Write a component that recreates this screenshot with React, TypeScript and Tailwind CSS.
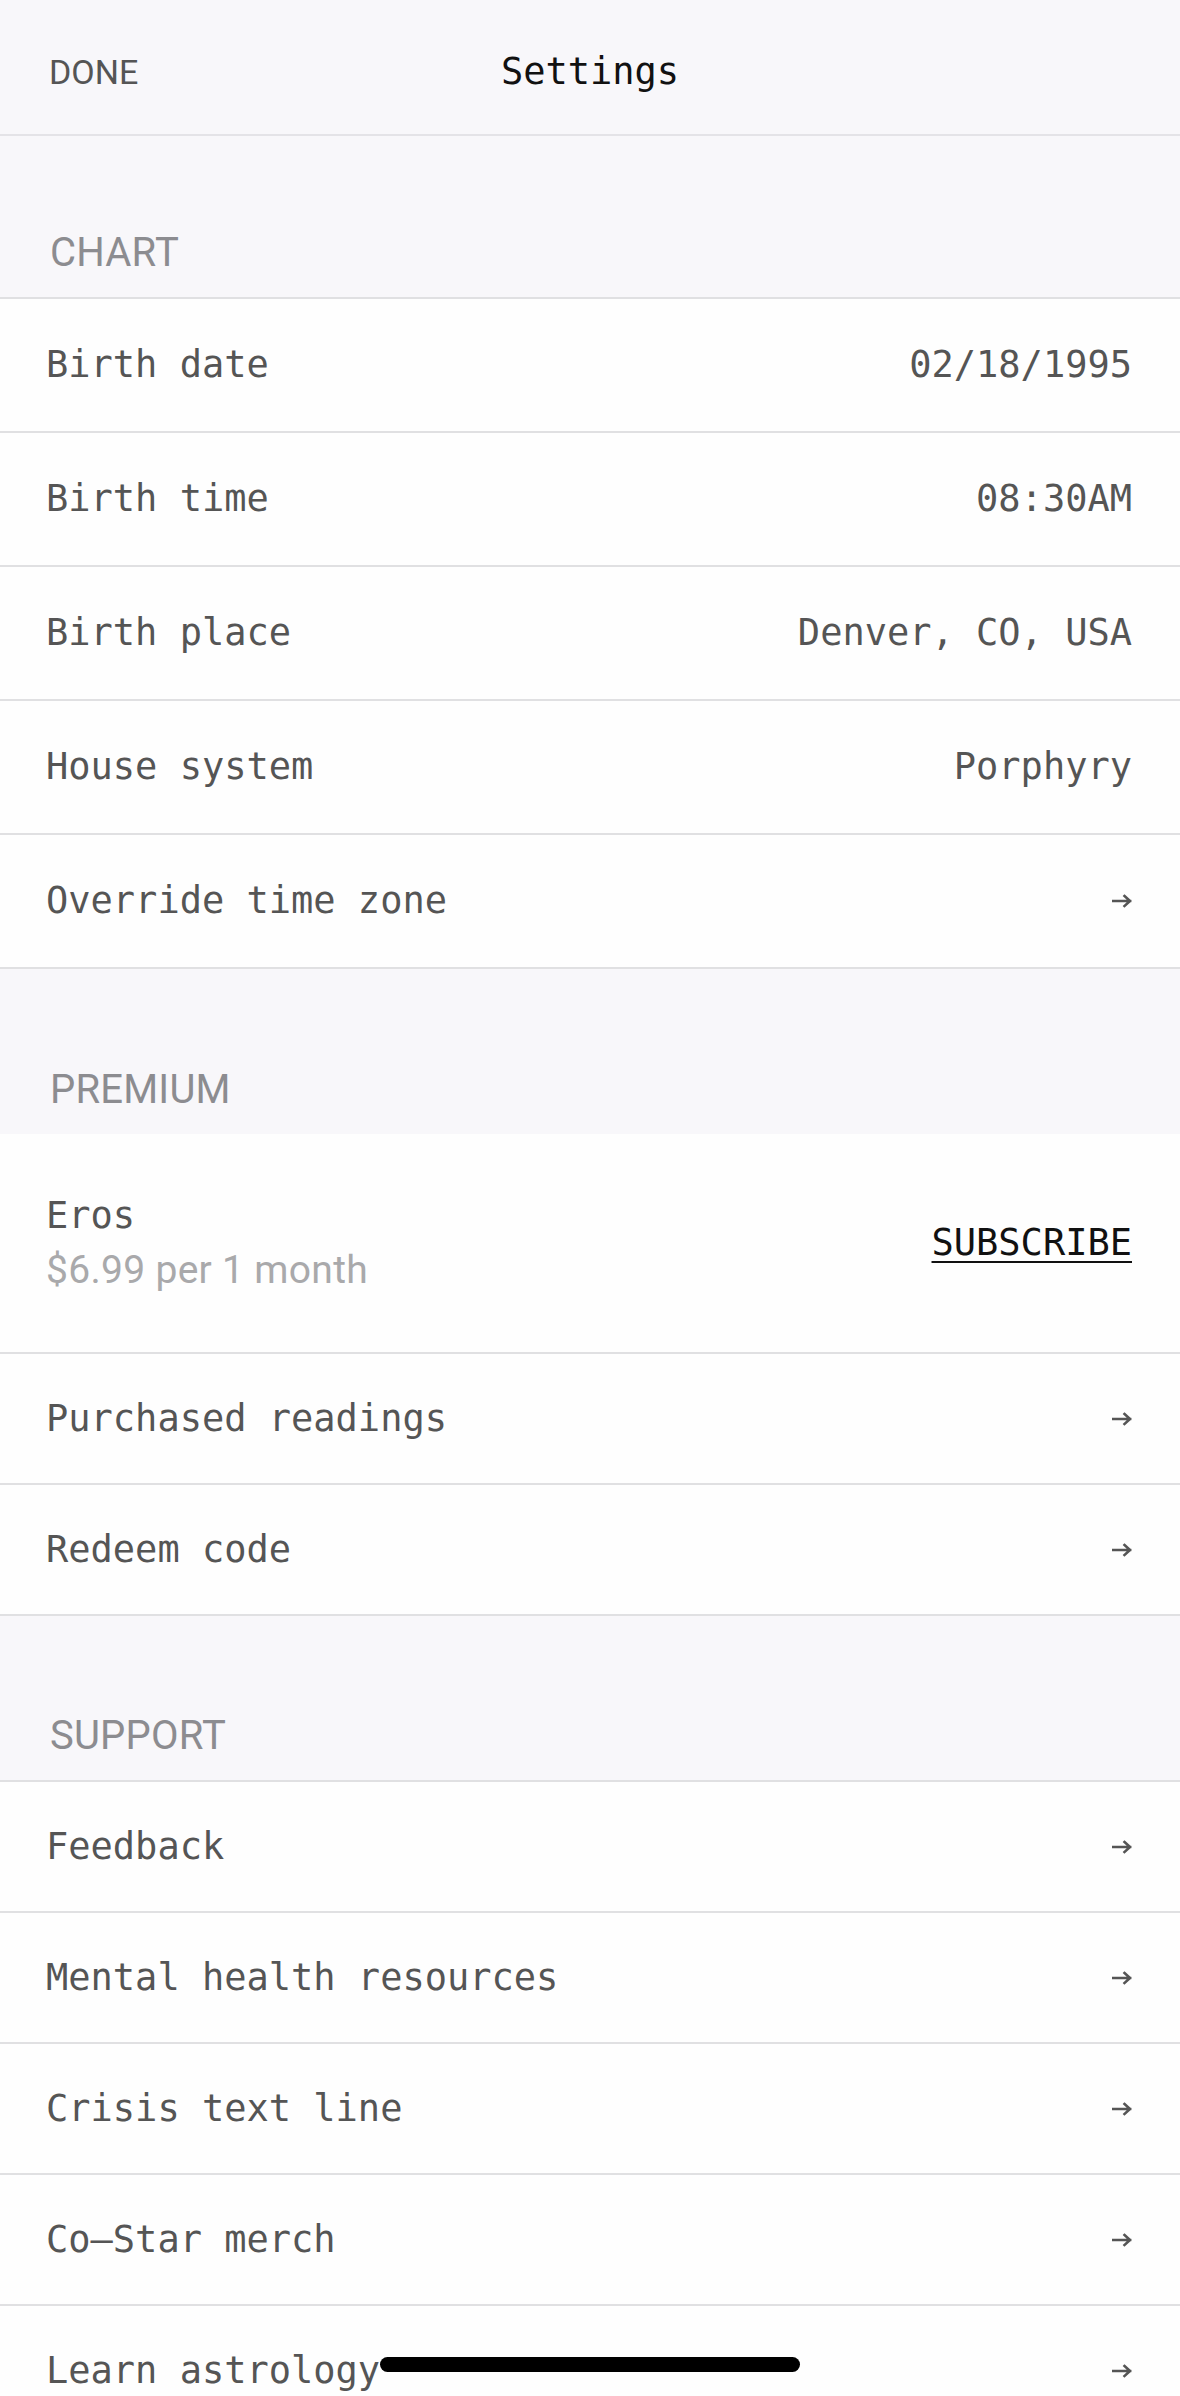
import React from 'react';

const mono = "font-['DejaVu_Sans_Mono','Liberation_Mono',monospace]";
const sans = "font-['Roboto','Liberation_Sans',sans-serif]";

type Row = { label: string; value?: string };

const chart: Row[] = [
  { label: 'Birth date', value: '02/18/1995' },
  { label: 'Birth time', value: '08:30AM' },
  { label: 'Birth place', value: 'Denver, CO, USA' },
  { label: 'House system', value: 'Porphyry' },
  { label: 'Override time zone' },
];

const premium: Row[] = [
  { label: 'Purchased readings' },
  { label: 'Redeem code' },
];

const support: Row[] = [
  { label: 'Feedback' },
  { label: 'Mental health resources' },
  { label: 'Crisis text line' },
  { label: 'Co\u2013Star merch' },
  { label: 'Learn astrology' },
];

function Arrow() {
  return (
    <svg width="20" height="14" viewBox="0 0 20 14" fill="none">
      <path
        d="M1 7h17M12.5 2l5.5 5-5.5 5"
        stroke="#555555"
        strokeWidth="2.6"
        strokeLinecap="square"
      />
    </svg>
  );
}

function SectionTitle({ title, size }: { title: string; size: 'chart' | 'premium' | 'support' }) {
  const box =
    size === 'chart'
      ? 'h-[163px] border-b-2 border-[#e0e0e2]'
      : size === 'support'
        ? 'h-[166px] border-b-2 border-[#e0e0e2]'
        : 'h-[165px]';
  return (
    <div className={`flex items-end bg-[#f8f7fa] px-[50px] pb-[24px] ${box}`}>
      <span className={`${sans} text-[40px] leading-none tracking-[0.2px] text-[#8c8c90]`}>
        {title}
      </span>
    </div>
  );
}

function SettingRow({ row, tall }: { row: Row; tall?: boolean }) {
  return (
    <div
      className={`flex items-center justify-between border-b-2 border-[#e0e0e2] bg-[#fefefe] pl-[46px] pr-[48px] ${
        tall ? 'h-[134px]' : 'h-[131px]'
      }`}
    >
      <span className={`${mono} text-[37px] text-[#555555]`}>{row.label}</span>
      {row.value ? (
        <span className={`${mono} text-[37px] text-[#555555]`}>{row.value}</span>
      ) : (
        <Arrow />
      )}
    </div>
  );
}

export default function App() {
  return (
    <div className="relative h-[2396px] w-full overflow-hidden bg-[#fefefe]">
      {/* nav bar */}
      <div className="grid h-[136px] grid-cols-[1fr_auto_1fr] items-center border-b-2 border-[#e4e3e7] bg-[#f8f7fa] px-[49px] pt-[10px]">
        <span className={`${sans} text-[34px] text-[#555555]`}>DONE</span>
        <span className={`${mono} text-[37px] text-[#111111]`}>Settings</span>
        <span />
      </div>

      <SectionTitle title="CHART" size="chart" />
      {chart.map((row) => (
        <SettingRow key={row.label} row={row} tall />
      ))}

      <SectionTitle title="PREMIUM" size="premium" />
      <div className="flex h-[220px] items-center justify-between border-b-2 border-[#e0e0e2] bg-[#fefefe] pl-[46px] pr-[48px]">
        <div className="flex flex-col">
          <span className={`${mono} text-[37px] leading-[55px] text-[#555555]`}>Eros</span>
          <span className={`${sans} text-[39px] leading-[55px] tracking-[0.3px] text-[#a9a9ab]`}>
            $6.99 per 1 month
          </span>
        </div>
        <span
          className={`${mono} text-[37px] text-[#111111] underline decoration-2 underline-offset-[6px]`}
        >
          SUBSCRIBE
        </span>
      </div>
      {premium.map((row) => (
        <SettingRow key={row.label} row={row} />
      ))}

      <SectionTitle title="SUPPORT" size="support" />
      {support.map((row) => (
        <SettingRow key={row.label} row={row} />
      ))}

      {/* home indicator */}
      <div className="absolute bottom-[24px] left-[380px] h-[15px] w-[420px] rounded-full bg-black" />
    </div>
  );
}
